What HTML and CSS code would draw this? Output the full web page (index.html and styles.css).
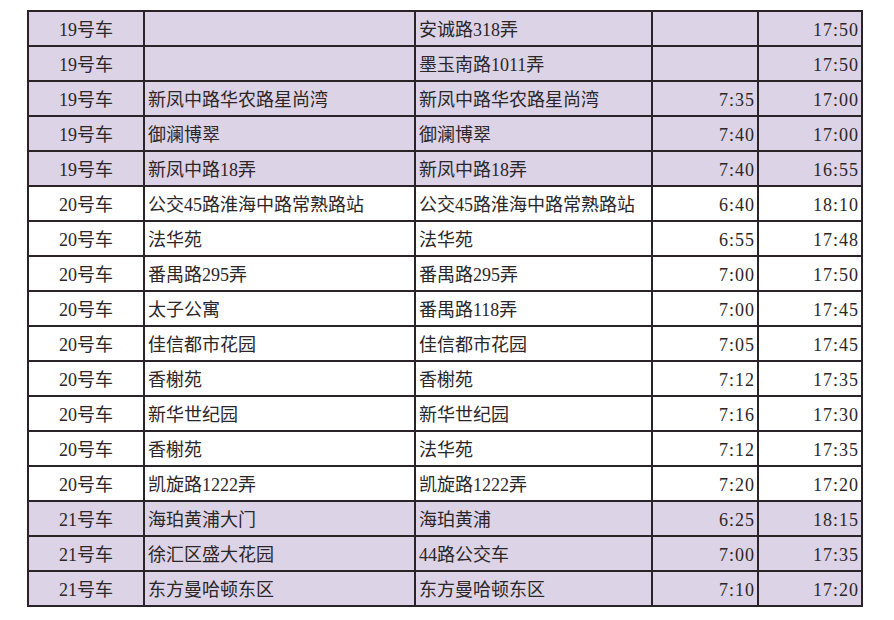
FILE: index.html
```html
<!DOCTYPE html>
<html lang="zh-CN">
<head>
<meta charset="utf-8">
<link rel="stylesheet" href="styles.css">
</head>
<body>
<table class="sched">
  <colgroup>
    <col class="c-car"><col class="c-from"><col class="c-to"><col class="c-t1"><col class="c-t2">
  </colgroup>
  <tbody>
    <tr class="purple"><td class="car">19号车</td><td></td><td>安诚路318弄</td><td class="num"></td><td class="num">17:50</td></tr>
    <tr class="purple"><td class="car">19号车</td><td></td><td>墨玉南路1011弄</td><td class="num"></td><td class="num">17:50</td></tr>
    <tr class="purple"><td class="car">19号车</td><td>新凤中路华农路星尚湾</td><td>新凤中路华农路星尚湾</td><td class="num">7:35</td><td class="num">17:00</td></tr>
    <tr class="purple"><td class="car">19号车</td><td>御澜博翠</td><td>御澜博翠</td><td class="num">7:40</td><td class="num">17:00</td></tr>
    <tr class="purple"><td class="car">19号车</td><td>新凤中路18弄</td><td>新凤中路18弄</td><td class="num">7:40</td><td class="num">16:55</td></tr>
    <tr><td class="car">20号车</td><td>公交45路淮海中路常熟路站</td><td>公交45路淮海中路常熟路站</td><td class="num">6:40</td><td class="num">18:10</td></tr>
    <tr><td class="car">20号车</td><td>法华苑</td><td>法华苑</td><td class="num">6:55</td><td class="num">17:48</td></tr>
    <tr><td class="car">20号车</td><td>番禺路295弄</td><td>番禺路295弄</td><td class="num">7:00</td><td class="num">17:50</td></tr>
    <tr><td class="car">20号车</td><td>太子公寓</td><td>番禺路118弄</td><td class="num">7:00</td><td class="num">17:45</td></tr>
    <tr><td class="car">20号车</td><td>佳信都市花园</td><td>佳信都市花园</td><td class="num">7:05</td><td class="num">17:45</td></tr>
    <tr><td class="car">20号车</td><td>香榭苑</td><td>香榭苑</td><td class="num">7:12</td><td class="num">17:35</td></tr>
    <tr><td class="car">20号车</td><td>新华世纪园</td><td>新华世纪园</td><td class="num">7:16</td><td class="num">17:30</td></tr>
    <tr><td class="car">20号车</td><td>香榭苑</td><td>法华苑</td><td class="num">7:12</td><td class="num">17:35</td></tr>
    <tr><td class="car">20号车</td><td>凯旋路1222弄</td><td>凯旋路1222弄</td><td class="num">7:20</td><td class="num">17:20</td></tr>
    <tr class="purple"><td class="car">21号车</td><td>海珀黄浦大门</td><td>海珀黄浦</td><td class="num">6:25</td><td class="num">18:15</td></tr>
    <tr class="purple"><td class="car">21号车</td><td>徐汇区盛大花园</td><td>44路公交车</td><td class="num">7:00</td><td class="num">17:35</td></tr>
    <tr class="purple"><td class="car">21号车</td><td>东方曼哈顿东区</td><td>东方曼哈顿东区</td><td class="num">7:10</td><td class="num">17:20</td></tr>
  </tbody>
</table>
</body>
</html>
```

FILE: styles.css
```css
html, body {
  margin: 0;
  padding: 0;
  background: #ffffff;
}
body {
  padding: 10px 0 0 27px;
  font-family: "Liberation Serif", "Noto Sans CJK SC", serif;
  color: #2b2628;
}
.sched {
  border-collapse: collapse;
  table-layout: fixed;
  width: 834px;
  font-size: 18px;
}
.c-car { width: 116px; }
.c-from { width: 271px; }
.c-to { width: 237px; }
.c-t1 { width: 106px; }
.c-t2 { width: 104px; }
.sched td {
  border: 2px solid #2a2327;
  height: 35px;
  padding: 2px 3px 0 3px;
  box-sizing: border-box;
  white-space: nowrap;
  overflow: hidden;
  vertical-align: middle;
  line-height: 1;
}
.sched tr.purple td {
  background: #dcd3e6;
}
.sched td.car {
  text-align: center;
  font-weight: normal;
}
.sched td.num {
  text-align: right;
  letter-spacing: 1px;
  padding-right: 2px;
}
```
